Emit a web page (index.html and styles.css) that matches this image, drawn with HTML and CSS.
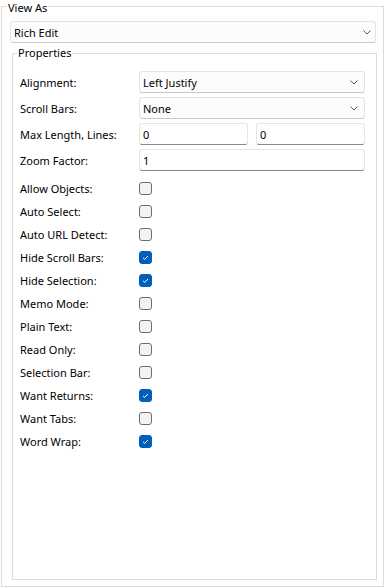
FILE: index.html
```html
<!DOCTYPE html>
<html>
<head>
<meta charset="utf-8">
<link rel="stylesheet" href="styles.css">
</head>
<body>
<fieldset class="group outer">
  <legend>View As</legend>
  <div class="combo top-combo"><span>Rich Edit</span><svg class="chev" width="8" height="5" viewBox="0 0 8 5"><polyline points="0.5,0.5 4,4 7.5,0.5" fill="none" stroke="#5a5a5a" stroke-width="1"/></svg></div>
  <fieldset class="group inner">
    <legend>Properties</legend>
    <div class="fields">
      <label class="lbl">Alignment:</label>
      <div class="combo"><span>Left Justify</span><svg class="chev" width="8" height="5" viewBox="0 0 8 5"><polyline points="0.5,0.5 4,4 7.5,0.5" fill="none" stroke="#5a5a5a" stroke-width="1"/></svg></div>
      <label class="lbl">Scroll Bars:</label>
      <div class="combo"><span>None</span><svg class="chev" width="8" height="5" viewBox="0 0 8 5"><polyline points="0.5,0.5 4,4 7.5,0.5" fill="none" stroke="#5a5a5a" stroke-width="1"/></svg></div>
      <label class="lbl">Max Length, Lines:</label>
      <div class="pair"><div class="text">0</div><div class="text">0</div></div>
      <label class="lbl">Zoom Factor:</label>
      <div class="text">1</div>
    </div>
    <div class="checks">
      <span class="lbl">Allow Objects:</span><span class="cb"></span>
      <span class="lbl">Auto Select:</span><span class="cb"></span>
      <span class="lbl">Auto URL Detect:</span><span class="cb"></span>
      <span class="lbl">Hide Scroll Bars:</span><span class="cb on"><svg width="13" height="13" viewBox="0 0 13 13"><polyline points="4,6.8 5.7,8.4 9,5" fill="none" stroke="#fff" stroke-width="1"/></svg></span>
      <span class="lbl">Hide Selection:</span><span class="cb on"><svg width="13" height="13" viewBox="0 0 13 13"><polyline points="4,6.8 5.7,8.4 9,5" fill="none" stroke="#fff" stroke-width="1"/></svg></span>
      <span class="lbl">Memo Mode:</span><span class="cb"></span>
      <span class="lbl">Plain Text:</span><span class="cb"></span>
      <span class="lbl">Read Only:</span><span class="cb"></span>
      <span class="lbl">Selection Bar:</span><span class="cb"></span>
      <span class="lbl">Want Returns:</span><span class="cb on"><svg width="13" height="13" viewBox="0 0 13 13"><polyline points="4,6.8 5.7,8.4 9,5" fill="none" stroke="#fff" stroke-width="1"/></svg></span>
      <span class="lbl">Want Tabs:</span><span class="cb"></span>
      <span class="lbl">Word Wrap:</span><span class="cb on"><svg width="13" height="13" viewBox="0 0 13 13"><polyline points="4,6.8 5.7,8.4 9,5" fill="none" stroke="#fff" stroke-width="1"/></svg></span>
    </div>
  </fieldset>
</fieldset>
</body>
</html>
```
FILE: styles.css
```css
html, body {
  margin: 0;
  padding: 0;
  background: #ffffff;
}
body {
  font-family: "Noto Sans", "Open Sans", sans-serif;
  font-size: 11px;
  color: #000;
}
.group {
  box-sizing: border-box;
  border: 1px solid #dcdcdc;
  margin: 0;
  min-width: 0;
}
.group > legend {
  padding: 0 1px;
  height: 12px;
  line-height: 12px;
}
.outer {
  margin-left: 1px;
  width: 383px;
  height: 587px;
  padding: 8px 6px 6px 0;
}
.outer > legend {
  margin-left: 5px;
  height: 13px;
  line-height: 15px;
}
.combo {
  box-sizing: border-box;
  height: 22px;
  display: flex;
  align-items: center;
  justify-content: space-between;
  padding: 0 6px 0 3px;
  background: #fcfcfc;
  border: 1px solid #e3e3e3;
  border-bottom-color: #c9c9c9;
  border-radius: 3px;
}
.top-combo {
  margin-left: 8px;
  width: 366px;
  padding-right: 4px;
}
.chev {
  display: block;
}
.inner {
  margin: 4px 0 0 10px;
  width: 365px;
  height: 533px;
  padding: 12px 11px 0 0;
}
.inner > legend {
  margin-left: 4px;
}
.fields {
  display: grid;
  grid-template-columns: 119px 1fr;
  row-gap: 4px;
  align-items: center;
  padding-left: 7px;
}
.lbl {
  white-space: nowrap;
}
.pair {
  display: flex;
  gap: 8px;
}
.pair .text {
  flex: 1;
}
.text {
  box-sizing: border-box;
  height: 22px;
  display: flex;
  align-items: center;
  padding-left: 3px;
  background: #fff;
  border: 1px solid #e5e5e5;
  border-bottom-color: #8a8a8a;
  border-radius: 3px;
}
.checks {
  display: grid;
  grid-template-columns: 119px 13px;
  grid-auto-rows: 23px;
  align-items: center;
  margin-top: 6px;
  padding-left: 7px;
}
.cb {
  box-sizing: border-box;
  width: 13px;
  height: 13px;
  border: 1px solid #6e6e6e;
  border-radius: 3px;
  background: #f3f3f3;
}
.cb.on {
  border-color: #005fb8;
  background: #005fb8;
}
.cb.on svg {
  display: block;
  margin: -1px;
}
```
